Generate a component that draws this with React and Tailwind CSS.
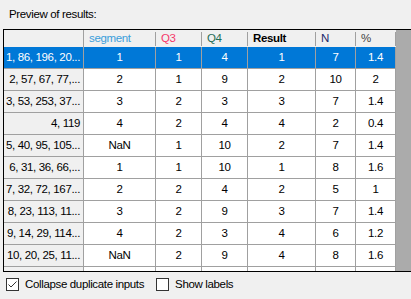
import React from "react";

const cols = [
  { key: "segment", label: "segment", w: "w-[72px]", color: "text-[#3a9edb]" },
  { key: "q3", label: "Q3", w: "w-[46px]", color: "text-[#f5386a]" },
  { key: "q4", label: "Q4", w: "w-[46px]", color: "text-[#1f6e55]" },
  { key: "result", label: "Result", w: "w-[68px]", color: "text-black font-bold" },
  { key: "n", label: "N", w: "w-[40px]", color: "text-[#1b2a6b]" },
  { key: "pct", label: "%", w: "w-[40px]", color: "text-[#444]" },
];

const rows = [
  ["1, 86, 196, 20...", "1", "1", "4", "1", "7", "1.4"],
  ["2, 57, 67, 77,...", "2", "1", "9", "2", "10", "2"],
  ["3, 53, 253, 37...", "3", "2", "3", "3", "7", "1.4"],
  ["4, 119", "4", "2", "4", "4", "2", "0.4"],
  ["5, 40, 95, 105...", "NaN", "1", "10", "2", "7", "1.4"],
  ["6, 31, 36, 66,...", "1", "1", "10", "1", "8", "1.6"],
  ["7, 32, 72, 167...", "2", "2", "4", "2", "5", "1"],
  ["8, 23, 113, 11...", "3", "2", "9", "3", "7", "1.4"],
  ["9, 14, 29, 114...", "4", "2", "3", "4", "6", "1.2"],
  ["10, 20, 25, 11...", "NaN", "2", "9", "4", "8", "1.6"],
];

function Row({ cells, selected }) {
  const [head, ...vals] = cells;
  return (
    <div className="flex h-[22px]">
      <div
        className={`w-[80px] shrink-0 border-r border-b border-[#a0a0a0] flex items-center justify-end pr-[3px] whitespace-nowrap ${
          selected ? "bg-[#0078d7] text-white" : "bg-[#f0f0f0] text-black"
        }`}
      >
        {head}
      </div>
      {vals.map((v, i) => (
        <div
          key={i}
          className={`${cols[i].w} shrink-0 border-r border-b border-[#a0a0a0] flex items-center justify-center ${
            selected ? "bg-[#0078d7] text-white" : "bg-white text-black"
          }`}
        >
          {v}
        </div>
      ))}
    </div>
  );
}

function Check({ checked, label }) {
  return (
    <label className="flex items-center gap-[6px]">
      <span className="w-[13px] h-[13px] border border-[#333] bg-white flex items-center justify-center">
        {checked && (
          <svg width="11" height="11" viewBox="0 0 11 11">
            <path d="M1.5 5.5 L4 8 L9.5 2.5" fill="none" stroke="#333" strokeWidth="1" />
          </svg>
        )}
      </span>
      <span>{label}</span>
    </label>
  );
}

export default function App() {
  return (
    <div className="w-[411px] h-[299px] bg-[#f0f0f0] overflow-hidden text-[11.5px] tracking-[-0.35px] text-black font-['Liberation_Sans',Arial,sans-serif]">
      <div className="pl-[9px] pt-[6px] h-[29px]">Preview of results:</div>
      <div className="ml-[3px] w-[420px] h-[243px] border border-black bg-[#ababab] overflow-hidden">
        <div className="flex h-[17px] bg-[#f0f0f0] w-[392px]">
          <div className="w-[80px] shrink-0 border-r border-[#a0a0a0]" />
          {cols.map((c) => (
            <div key={c.key} className={`${c.w} shrink-0 flex items-center pl-[5px] ${c.color}`}>
              <span className="flex-1">{c.label}</span>
              <span className="w-px h-[14px] bg-[#a0a0a0]" />
            </div>
          ))}
        </div>
        <div className="w-[392px]">
          {rows.map((r, i) => (
            <Row key={i} cells={r} selected={i === 0} />
          ))}
          <Row cells={["", "", "", "", "", "", ""]} />
        </div>
      </div>
      <div className="flex items-center gap-[12px] pl-[6px] pt-[4px]">
        <Check checked label="Collapse duplicate inputs" />
        <Check label="Show labels" />
      </div>
    </div>
  );
}
